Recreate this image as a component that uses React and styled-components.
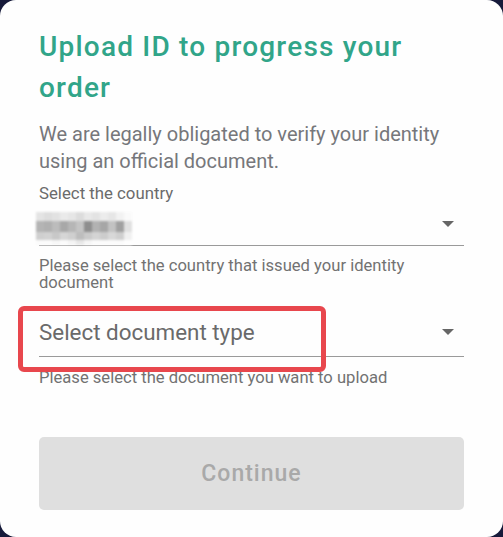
import React from "react";
import styled, { createGlobalStyle } from "styled-components";

const Global = createGlobalStyle`
  html, body { margin: 0; padding: 0; background: #161a3a; }
  body { font-family: Roboto, "Noto Sans", sans-serif; }
  * { box-sizing: border-box; }
`;

const Card = styled.div`
  width: 503px;
  height: 537px;
  background: #fefefe;
  border-radius: 16px;
  padding: 26px 39px 0 39px;
  display: flex;
  flex-direction: column;
`;

const Title = styled.h1`
  margin: 0;
  font-size: 28px;
  font-weight: 500;
  line-height: 41px;
  letter-spacing: 1.2px;
  color: #31a589;
`;

const Lead = styled.p`
  margin: 13px 0 0 0;
  font-size: 20px;
  line-height: 27px;
  color: #76777b;
`;

const Field = styled.div`
  position: relative;
  margin-top: ${(p) => p.$top}px;
`;

const Label = styled.div`
  font-size: 16.8px;
  line-height: 20px;
  color: #6b6b6b;
`;

const SelectRow = styled.div`
  display: flex;
  align-items: center;
  justify-content: space-between;
  height: ${(p) => p.$h}px;
  border-bottom: 1px solid #9a9a9a;
  padding-right: 10px;
`;

const Placeholder = styled.span`
  font-size: 22.4px;
  color: #6a6a6a;
`;

const Mosaic = styled.div`
  display: grid;
  grid-template-columns: repeat(12, 8px);
  grid-template-rows: 9px 11px 8px 5px;
  margin-left: -3px;
  margin-top: 8px;
  filter: blur(0.8px);
`;

const Cell = styled.span`
  display: block;
  background: ${(p) => p.$c};
`;

const Arrow = styled.svg`
  width: 12px;
  height: 6px;
  display: block;
`;

const Helper = styled.div`
  margin-top: ${(p) => p.$top}px;
  font-size: 16.6px;
  line-height: 17px;
  color: #727272;
`;

const Highlight = styled.div`
  position: absolute;
  left: -21px;
  top: -2px;
  width: 308px;
  height: 66px;
  border: 5px solid #e8474d;
  border-radius: 6px;
  pointer-events: none;
`;

const Button = styled.button`
  margin-top: 51px;
  width: 100%;
  height: 73px;
  border: none;
  border-radius: 5px;
  background: #dfdfdf;
  color: #a9a9a9;
  font-family: Roboto, sans-serif;
  font-size: 23px;
  font-weight: 500;
  letter-spacing: 1px;
`;

const Caret = () => (
  <Arrow viewBox="0 0 12 6">
    <path d="M0 0 L12 0 L6 6 Z" fill="#666" />
  </Arrow>
);

const mosaic = [
  ["#e4e4e4", "#dedede", "#e2e2e2", "#eaeaea", "#e6e6e6", "#dcdcdc", "#e8e8e8", "#e3e3e3", "#ececec", "#e6e6e6", "#f2f2f2", "#fafafa"],
  ["#b4b4b4", "#b0b0b0", "#bcbcbc", "#a8a8a8", "#b6b6b6", "#c4c4c4", "#8e8e8e", "#b2b2b2", "#a6a6a6", "#c2c2c2", "#a0a0a0", "#e0e0e0"],
  ["#cfcfcf", "#d2d2d2", "#c8c8c8", "#d6d6d6", "#cfcfcf", "#bdbdbd", "#cacaca", "#d4d4d4", "#cccccc", "#d8d8d8", "#cfcfcf", "#f0f0f0"],
  ["#fbfbfb", "#fbfbfb", "#f7f7f7", "#fbfbfb", "#f4f4f4", "#e8e8e8", "#f6f6f6", "#fbfbfb", "#fbfbfb", "#fbfbfb", "#fbfbfb", "#fefefe"],
];

export default function App() {
  return (
    <>
      <Global />
      <Card>
        <Title>Upload ID to progress your order</Title>
        <Lead>We are legally obligated to verify your identity using an official document.</Lead>
        <Field $top={8}>
          <Label>Select the country</Label>
          <SelectRow $h={43}>
            <Mosaic>
              {mosaic.flat().map((c, i) => (
                <Cell key={i} $c={c} />
              ))}
            </Mosaic>
            <Caret />
          </SelectRow>
        </Field>
        <Helper $top={11}>Please select the country that issued your identity document</Helper>
        <Field $top={17}>
          <SelectRow $h={49}>
            <Placeholder>Select document type</Placeholder>
            <Caret />
          </SelectRow>
          <Highlight />
        </Field>
        <Helper $top={12}>Please select the document you want to upload</Helper>
        <Button disabled>Continue</Button>
      </Card>
    </>
  );
}
